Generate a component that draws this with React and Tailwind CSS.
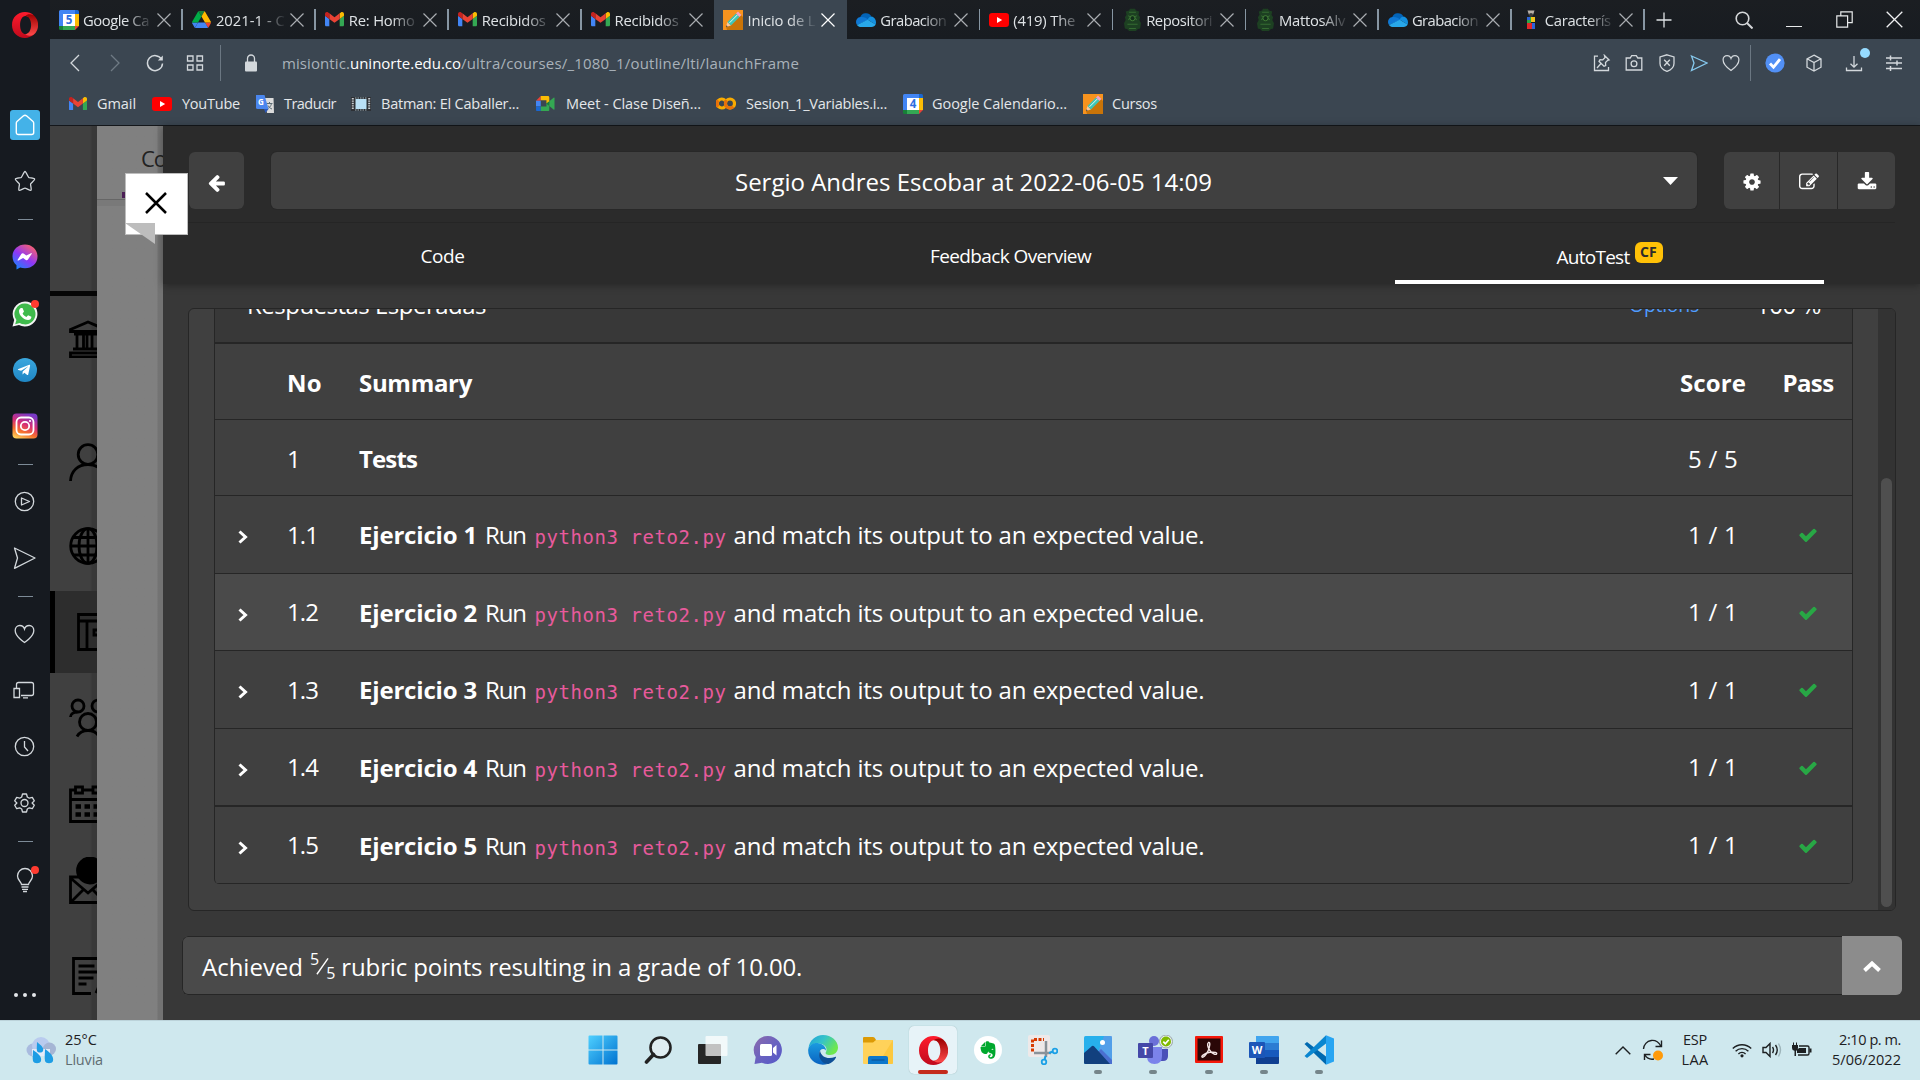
import React, { useLayoutEffect, useRef, useState } from "react";
import { FaTelegramPlane, FaEvernote } from "react-icons/fa";

/* Text whose letter spacing is computed so that it spans exactly `w` pixels. */
function Fit({ w, children, className = "" }) {
  const ref = useRef(null);
  const [ls, setLs] = useState(0);
  useLayoutEffect(() => {
    const n = String(children).length;
    const natural = ref.current.getBoundingClientRect().width;
    setLs((w - natural) / n);
  }, []);
  return (
    <span ref={ref} className={"inline-block whitespace-pre " + className} style={{ letterSpacing: ls + "px" }}>
      {children}
    </span>
  );
}

function Svg({ vb = "0 0 24 24", className = "", children, ...rest }) {
  return (
    <svg viewBox={vb} className={"block shrink-0 " + className} fill="none" {...rest}>
      {children}
    </svg>
  );
}

/* ---------- site icons ---------- */
const Gmail = ({ className = "w-[19px]" }) => (
  <Svg vb="52 42 88 66" className={className}>
    <path fill="#4285f4" d="M58 108h14V74L52 59v43c0 3.32 2.69 6 6 6" />
    <path fill="#34a853" d="M120 108h14c3.32 0 6-2.69 6-6V59l-20 15" />
    <path fill="#fbbc04" d="M120 48v26l20-15v-8c0-7.42-8.47-11.65-14.4-7.2" />
    <path fill="#ea4335" d="M72 74V48l24 18 24-18v26L96 92" />
    <path fill="#c5221f" d="M52 51v8l20 15V48l-5.6-4.2c-5.94-4.45-14.4-.22-14.4 7.2" />
  </Svg>
);
const Drive = () => (
  <Svg vb="0 0 87.3 78" className="w-[19px]">
    <path fill="#4285f4" d="m6.6 66.85 3.85 6.65c.8 1.4 1.95 2.5 3.3 3.3l13.75-23.8h-27.5c0 1.55.4 3.1 1.2 4.5z" />
    <path fill="#00ac47" d="m43.65 25-13.75-23.8c-1.35.8-2.5 1.9-3.3 3.3l-25.4 44a9.06 9.06 0 0 0 -1.2 4.5h27.5z" />
    <path fill="#ea4335" d="m73.55 76.8c1.35-.8 2.5-1.9 3.3-3.3l1.6-2.75 7.65-13.25c.8-1.4 1.2-2.95 1.2-4.5h-27.502l5.852 11.5z" />
    <path fill="#188038" d="m43.65 25 13.75-23.8c-1.35-.8-2.9-1.2-4.5-1.2h-18.5c-1.6 0-3.15.45-4.5 1.2z" />
    <path fill="#4285f4" d="m59.8 53h-32.3l-13.75 23.8c1.35.8 2.9 1.2 4.5 1.2h50.8c1.6 0 3.15-.45 4.5-1.2z" />
    <path fill="#ffba00" d="m73.4 26.5-12.7-22c-.8-1.4-1.95-2.5-3.3-3.3l-13.75 23.8 16.15 28h27.45c0-1.55-.4-3.1-1.2-4.5z" />
  </Svg>
);
const Calendar = ({ day }) => (
  <Svg vb="0 0 20 20" className="w-5">
    <path fill="#4285f4" d="M1.500 0H16v4H4v12H0V1.500Q0 0 1.500 0z" />
    <path fill="#1967d2" d="M16 0h2.500Q20 0 20 1.500V4h-4z" />
    <path fill="#fbbc04" d="M16 4h4v12h-4z" />
    <path fill="#34a853" d="M4 16h12v4H4z" />
    <path fill="#188038" d="M0 16h4v4H1.500Q0 20 0 18.500z" />
    <path fill="#ea4335" d="M16 16h4l-4 4z" />
    <path fill="#fff" d="M4 4h12v12H4z" />
    <text x="10" y="14.200" textAnchor="middle" fontSize="11.500" fontWeight="700" fontFamily="Open Sans, sans-serif" fill="#2f6fe0">{day}</text>
  </Svg>
);
const YouTube = () => (
  <Svg vb="0 0 20 14" className="w-5">
    <rect width="20" height="14" rx="3.200" fill="#f00" />
    <path fill="#fff" d="M8 4l5.200 3L8 10z" />
  </Svg>
);
const Pencil = () => (
  <Svg vb="0 0 20 20" className="w-5">
    <path fill="#f7931e" d="M0 0h20v20H0z" />
    <path fill="#c97408" d="M15 2l5 5v13H4l-1-3z" />
    <path fill="#f9c9a0" d="M3 17l1.500-5 3.500 3.500z" />
    <path fill="#3fc6b6" d="M4.500 12L13 3.500 16.500 7 8 15.500z" />
    <path stroke="#e9fbf8" strokeWidth="1" d="M6.500 12.800l8-8" />
    <path fill="#f4a3c8" d="M13 3.500L15 1.600 18.400 5 16.500 7z" />
    <path fill="#333" d="M3 17l.5-1.700 1.200 1.200z" />
  </Svg>
);
const OneDrive = () => (
  <Svg vb="0 0 20 15" className="w-5">
    <path fill="#0364b8" d="M4 6.500a6 6 0 0 1 11.300-2L12.500 9z" />
    <path fill="#0f78d4" d="M4.500 5C1.500 5.300 0 7.500 0 10q0 1.600 1 3l11.500-5C10.500 5.500 7.500 4.600 4.500 5z" />
    <path fill="#1490df" d="M11.500 7.500a5.500 5.500 0 0 1 4.500-3C18.500 5.500 20 7.500 20 10.500q0 1-.5 2z" />
    <path fill="#28a8ea" d="M1 13c1 1.400 2.400 2 4 2h10.500c2 0 3.400-.9 4.200-2.500L11.700 7.800z" />
  </Svg>
);
const Crest = () => (
  <Svg vb="0 0 20 28" className="w-[17px]">
    <path fill="#1d4022" d="M7 1h6l1 2 4 1-1 4 2 3-1 3 2 4-1 6-3 1-2 2H6l-2-2-3-1-1-6 2-4-1-3 2-3-1-4 4-1z" />
    <path stroke="#356b32" strokeWidth="1.200" d="M6 5h8M5 9l3 2-3 3M15 9l-3 2 3 3M4 19h12M6 24h8" />
    <circle cx="10" cy="12" r="3" fill="#12301a" stroke="#4a8a3c" />
  </Svg>
);
const Figure = () => (
  <Svg vb="0 0 20 22" className="w-5">
    <path fill="#b9b2a8" d="M6.500 1.500h7L12 6H8z" />
    <circle cx="10" cy="6" r="2" fill="#3b3b3b" />
    <path fill="#2aa84a" d="M6 8h4v6H6z" />
    <path fill="#2d62d8" d="M6 8h3v3H6zM10 14h4v6h-4z" />
    <path fill="#f2c21a" d="M10 8h4v5h-4z" />
    <path fill="#e02828" d="M6 14h5v6H6z" />
  </Svg>
);
const Translate = () => (
  <Svg vb="0 0 20 20" className="w-5">
    <path fill="#dcdcdc" d="M9 4h9.500L19 19l-7 0z" />
    <path stroke="#5b6b74" strokeWidth="1" d="M11.500 9.500h6M14.500 8v1.500M16.500 9.500c-.6 3-2.500 4.500-4 5.200M13 11.500c.8 1.800 2.500 3 4 3.500" />
    <path fill="#4a86ee" d="M1 1h8.500l4 14H2.500Q1 15 1 13.500z" />
    <path fill="#2b58b8" d="M9 15h4.500L10.500 19z" />
    <text x="6" y="10.800" textAnchor="middle" fontSize="8" fontWeight="700" fontFamily="Open Sans, sans-serif" fill="#fff">G</text>
  </Svg>
);
const Film = () => (
  <Svg vb="0 0 20 14" className="w-5">
    <rect width="20" height="14" fill="#2d3035" />
    <path fill="#b9e0f5" d="M4.500 2h11v10h-11z" />
    <path stroke="#c8ccd0" strokeWidth="2" strokeDasharray="1.400 1" d="M1.800 1v12M18.200 1v12" />
    <path stroke="#9fb0ba" strokeWidth="1" strokeDasharray="1.500 1" d="M4 1h12M4 13h12" />
  </Svg>
);
const Meet = () => (
  <Svg vb="0 0 20 16" className="w-[19px]">
    <path fill="#ea4335" d="M0 5l5-5v5z" />
    <path fill="#fbbc04" d="M5 0h7.500Q14 0 14 1.500V6l-3 2V4.500H5z" />
    <path fill="#4285f4" d="M0 5h5v6H0z" />
    <path fill="#1967d2" d="M0 11h5v5H1.500Q0 16 0 14.500z" />
    <path fill="#34a853" d="M5 11h6V8l3 2v4.500q0 1.500-1.500 1.500H5z" />
    <path fill="#188038" d="M11 8l3-2.500V10.500z" />
    <path fill="#34a853" d="M14 5.500l4.500-3.700q1-.6 1 .6v11.200q0 1.200-1 .6L14 10.500z" />
  </Svg>
);
const Colab = () => (
  <Svg vb="0 0 20 13" className="w-5">
    <path stroke="#f9ab00" strokeWidth="3.200" d="M9 3.400A4.500 4.500 0 1 0 9 9.600" />
    <circle cx="14" cy="6.500" r="4.500" stroke="#f9ab00" strokeWidth="3.200" />
    <path stroke="#e8710a" strokeWidth="3.200" d="M10.800 3.300A4.500 4.500 0 0 0 17.200 9.700M2.300 9.700A4.500 4.500 0 0 1 2.300 3.300" />
  </Svg>
);
const OperaO = ({ className, id }) => (
  <Svg vb="0 0 28 28" className={className}>
    <defs>
      <linearGradient id={id} x1="0" y1="0" x2="0" y2="1">
        <stop offset="0" stopColor="#ff1b2d" />
        <stop offset="1" stopColor="#c00a1c" />
      </linearGradient>
      <linearGradient id={id + "b"} x1="0" y1="0" x2="0" y2="1">
        <stop offset="0" stopColor="#9c0000" />
        <stop offset="1" stopColor="#ff4b4b" />
      </linearGradient>
    </defs>
    <path fill={"url(#" + id + ")"} fillRule="evenodd" d="M14 0C6 0 0 6 0 14s6 14 14 14c3.500 0 6.800-1.200 9.300-3.400L18 22.600c-1 .8-2.200 1.200-3.500 1.200-3.600 0-5.800-4.500-5.800-9.800s2.200-9.800 5.800-9.800c1.300 0 2.500.4 3.500 1.200l5.300-2C20.800 1.200 17.500 0 14 0z" />
    <path fill={"url(#" + id + "b)"} d="M14.500 4.200c1.200-1.700 5-2.500 8.800-.8a14 14 0 0 1 0 21.200c-3.800 1.700-7.600.9-8.800-.8 3.500 0 6.100-4.500 6.100-9.800s-2.600-9.800-6.100-9.800z" />
  </Svg>
);

/* ---------- tab strip ---------- */
const tabs = [
  [<Calendar day="5" />, "Google Ca", 66],
  [<Drive />, "2021-1 - C", 69],
  [<Gmail />, "Re: Homo", 66],
  [<Gmail />, "Recibidos", 64],
  [<Gmail />, "Recibidos", 64],
  [<Pencil />, "Inicio de L", 68],
  [<OneDrive />, "Grabacion", 66],
  [<YouTube />, "(419) The", 62],
  [<Crest />, "Repositori", 66],
  [<Crest />, "MattosAlv", 66],
  [<OneDrive />, "Grabacion", 66],
  [<Figure />, "Caracterís", 66],
];

function Tab({ icon, text, w, active, line }) {
  return (
    <div className={"flex h-[39px] w-[132.9px] shrink-0 items-center pl-[9px] " + (active ? "bg-[#3b4651]" : "")}>
      <div className="flex w-5 shrink-0 justify-center">{icon}</div>
      <div className="ml-[4px] w-[69px] shrink-0 whitespace-nowrap text-[14.800px] leading-[22px] text-[#dfe3e6] [mask-image:linear-gradient(to_right,black_62%,transparent_102%)]">
        <Fit w={w}>{text}</Fit>
      </div>
      <Svg vb="0 0 14 14" className="ml-[5px] w-[14px]">
        <path d="M.5.5l13 13M13.500.5l-13 13" stroke={active ? "#fff" : "#a9adb1"} strokeWidth="1.200" />
      </Svg>
      <div className={"ml-auto h-[21px] w-[1.500px] shrink-0 " + (line ? "bg-[#8796a3]" : "")} />
    </div>
  );
}

function TabStrip() {
  return (
    <div className="flex h-[39px] items-center bg-gradient-to-b from-[#1b1e22] to-[#181c21]">
      {tabs.map(([icon, text, w], i) => (
        <Tab key={i} icon={icon} text={text} w={w} active={i === 5} line={i !== 4 && i !== 5} />
      ))}
      <Svg vb="0 0 16 16" className="ml-[11px] w-[16px]">
        <path d="M8 .5v15M.5 8h15" stroke="#dfe3e6" strokeWidth="1.300" />
      </Svg>
      <div className="ml-auto flex items-center pr-[17px]">
        <Svg vb="0 0 18 18" className="mr-[33px] w-[18px]">
          <circle cx="7.500" cy="7.500" r="6.300" stroke="#d5d7d9" strokeWidth="1.600" />
          <path d="M12 12l5.500 5.500" stroke="#d5d7d9" strokeWidth="2" />
        </Svg>
        <div className="mr-[34px] mt-[14px] h-[1.500px] w-[16px] bg-[#e8eaeb]" />
        <Svg vb="0 0 17 17" className="mr-[33px] w-[17px]" stroke="#e8eaeb" strokeWidth="1.200">
          <path d="M.8 4.800h10.800v11.400H.8zM4.800 4.800V.8h11.400v10.800h-4.400" />
        </Svg>
        <Svg vb="0 0 17 17" className="w-[17px]" stroke="#f0f1f2" strokeWidth="1.300">
          <path d="M.7.7l15.600 15.600M16.300.7L.7 16.300" />
        </Svg>
      </div>
    </div>
  );
}

/* ---------- address bar ---------- */
const heart = "M12 21S2.500 14.500 2.500 8.200C2.500 5 4.800 3 7.300 3 9.500 3 11.200 4.200 12 6.500 12.800 4.200 14.500 3 16.700 3c2.500 0 4.800 2 4.800 5.200C21.500 14.500 12 21 12 21z";

function AddressBar() {
  const s = { stroke: "#d3d8dc", strokeWidth: 1.3 };
  return (
    <div className="flex h-[47px] items-center pl-[19px] pr-[17px]">
      <Svg vb="0 0 12 18" className="w-[12px]" {...s}><path d="M10 1L2 9l8 8" /></Svg>
      <Svg vb="0 0 12 18" className="ml-[28px] w-[12px]" stroke="#6f7a84" strokeWidth="1.300"><path d="M2 1l8 8-8 8" /></Svg>
      <Svg vb="0 0 18 18" className="ml-[25px] w-[18px]" {...s} strokeWidth="1.500">
        <path d="M15.600 5.500A7.500 7.500 0 1 0 16.500 9.500" />
        <path d="M16.800 1.500v5h-5z" fill="#d3d8dc" stroke="none" />
      </Svg>
      <Svg vb="0 0 18 18" className="ml-[22px] w-[18px]" {...s}>
        <path d="M1.500 2h5.500v5H1.500zM11 2h5.500v5H11zM1.500 11h5.500v5H1.500zM11 11h5.500v5H11z" />
      </Svg>
      <div className="ml-[16px] h-[36px] w-px bg-[#6b7782]" />
      <Svg vb="0 0 14 18" className="ml-[23px] w-[14px]">
        <path d="M3.500 8V4.500a3.500 3.500 0 0 1 7 0V8" stroke="#d3d8dc" strokeWidth="1.300" />
        <rect x="1" y="7.500" width="12" height="10" rx="1" fill="#d3d8dc" />
      </Svg>
      <div className="ml-[24px] flex text-[15px] leading-[24px] text-[#a9b2ba]">
        <Fit w={68}>misiontic.</Fit>
        <Fit w={111} className="text-white">uninorte.edu.co</Fit>
        <Fit w={338}>/ultra/courses/_1080_1/outline/lti/launchFrame</Fit>
      </div>
      <div className="ml-auto flex items-center">
        <Svg vb="0 0 18 18" className="w-[18px]" {...s}>
          <path d="M5 2.200H1.500v14.300h14V13M11.500 1.500l4.500 4.500-1.300.3-2.200 2.300.2 3-1.700.7-5-5 1-1.700 2.800.2 2.200-2.200zM8 9.500l-4 4.500" />
        </Svg>
        <Svg vb="0 0 18 18" className="ml-[14px] w-[18px]" {...s}>
          <path d="M1.200 4h4l1.500-2.300h4.600L12.800 4h4v12H1.200z" /><circle cx="9" cy="9.800" r="2.900" />
        </Svg>
        <Svg vb="0 0 18 18" className="ml-[15px] w-[18px]" {...s}>
          <path d="M9 .8l7 2.200v6.500c0 4-3.500 6.600-7 7.900-3.500-1.300-7-3.900-7-7.900V3zM6.200 5.800l5.600 6M11.800 5.800l-5.600 6" />
        </Svg>
        <Svg vb="0 0 18 18" className="ml-[14px] w-[18px]" stroke="#86c9ee" strokeWidth="1.300">
          <path d="M1.500 2l15.500 7L1.500 16.500l2.500-7.500z" />
        </Svg>
        <Svg className="ml-[13px] w-[20px]" stroke="#d3d8dc" strokeWidth="1.500"><path d={heart} /></Svg>
        <div className="ml-[9px] h-[36px] w-px bg-[#6b7782]" />
        <Svg vb="0 0 20 20" className="ml-[14px] w-[20px]">
          <circle cx="10" cy="10" r="9.600" fill="#5290f5" />
          <path d="M5 10.500l3.500 3.700L15 6.200" stroke="#fff" strokeWidth="2.800" />
        </Svg>
        <Svg vb="0 0 18 18" className="ml-[20px] w-[18px]" {...s}>
          <path d="M9 1.200l7 3.600v8.400l-7 3.800-7-3.800V4.800zM2 4.800l7 3.700 7-3.700M9 8.500V17" />
        </Svg>
        <div className="relative ml-[22px]">
          <Svg vb="0 0 18 18" className="w-[18px]" {...s}><path d="M9 2v11M5.500 9.700L9 13.200l3.500-3.500M1.500 13.500v3h15v-3" /></Svg>
          <div className="absolute -top-[6px] left-[15px] size-[10px] rounded-full bg-[#96dbff]" />
        </div>
        <Svg vb="0 0 18 18" className="ml-[22px] w-[18px]" {...s} strokeWidth="1.500">
          <path d="M1 4h16M1 9h16M1 14.500h16M5.500 1.500v5M12 6.500v5M5.500 12v5" />
        </Svg>
      </div>
    </div>
  );
}

const bookmarks = [
  ["w-[83px]", <Gmail className="w-[18px]" />, "ml-[10px]", "Gmail", 39],
  ["w-[103px]", <YouTube />, "ml-[10px]", "YouTube", 58],
  ["w-[96px]", <Translate />, "ml-[9px]", "Traducir", 52],
  ["w-[185px]", <Film />, "ml-[10px]", "Batman: El Caballer...", 138],
  ["w-[180px]", <Meet />, "ml-[11px]", "Meet - Clase Diseñ...", 135],
  ["w-[187px]", <Colab />, "ml-[10px]", "Sesion_1_Variables.i...", 141],
  ["w-[180px]", <Calendar day="4" />, "ml-[9px]", "Google Calendario...", 135],
  ["w-[100px]", <Pencil />, "ml-[9px]", "Cursos", 45],
];

function Bookmarks() {
  return (
    <div className="flex h-[40px] items-center border-b border-[#14171b] pb-[4px] pl-[19px] text-[14.500px] leading-[22px] text-[#e4e7ea]">
      {bookmarks.map(([w, icon, gap, label, tw]) => (
        <div key={label} className={"flex shrink-0 items-center " + w}>
          {icon}
          <div className={gap}><Fit w={tw}>{label}</Fit></div>
        </div>
      ))}
    </div>
  );
}

/* ---------- browser side rail ---------- */
const Dot = () => <div className="absolute left-[19px] -top-[1px] size-[8px] rounded-full bg-[#ff3b30]" />;
const Dash = ({ className }) => (
  <div className={"flex h-[12px] items-center " + className}><div className="h-px w-[15px] bg-[#7d8b97]" /></div>
);

function Rail() {
  const s = { stroke: "#d3d8dc", strokeWidth: 1.3 };
  return (
    <div className="flex w-[50px] shrink-0 flex-col items-center bg-[#161a20]">
      <OperaO id="opA" className="mt-[12px] w-[26px]" />
      <div className="mt-[72px] flex h-[30px] w-[30px] items-center justify-center rounded-[3px] bg-[#44b2e8]">
        <Svg vb="0 0 20 22" className="h-[22px] w-[20px]" stroke="#fff" strokeWidth="1.400">
          <path d="M8.500 1.800Q10 .8 11.500 1.800L18 7.500q.7.700.7 1.700v9.300a2 2 0 0 1-2 2H3.300a2 2 0 0 1-2-2V9.200q0-1 .7-1.700z" strokeLinejoin="round" />
        </Svg>
      </div>
      <Svg vb="0 0 26 26" className="mt-[28px] w-[26px]" {...s}>
        <path d="M13 3.500c1 0 3 5.500 3.700 5.900.6.500 5.700.6 6 1.600.3.900-3.800 4.200-4.100 5-.3.800 1.200 5.700.4 6.300-.8.500-5-2.200-6-2.200s-5.200 2.700-6 2.200c-.8-.6.700-5.500.4-6.300-.3-.800-4.400-4.100-4.100-5 .3-1 5.400-1.100 6-1.600.7-.4 2.700-5.900 3.700-5.900z" />
      </Svg>
      <Dash className="mt-[19px]" />
      <Svg vb="0 0 26 26" className="mt-[19px] w-[26px]">
        <defs><linearGradient id="msg" x1=".1" y1="1" x2=".8" y2="0"><stop offset="0" stopColor="#0a8cff" /><stop offset=".5" stopColor="#9036f5" /><stop offset="1" stopColor="#ff6468" /></linearGradient></defs>
        <path fill="url(#msg)" d="M13 .5C6 .5.500 5.600.500 12.400c0 3.500 1.500 6.600 4 8.800V25.500l3.700-2c1.500.5 3.100.7 4.800.7 7 0 12.500-5 12.500-11.800S20 .5 13 .5z" />
        <path fill="#fff" d="M5.500 16l3.800-6q1-1.300 2.300-.4l2.700 2L19 9.200q1-.4.800.5L16 15.500q-.9 1.300-2.200.4l-2.700-2-4.600 2.500q-1 .4-1-.4z" />
      </Svg>
      <div className="relative mt-[31px] flex size-[26px] items-center justify-center">
        <Svg vb="0 0 26 26" className="w-[26px]">
          <path d="M13 .5a12.500 12.500 0 1 1-6 23.500L.5 25.500 2.200 19A12.500 12.500 0 0 1 13 .5z" fill="#f4f4f4" />
          <path d="M13 2.600a10.400 10.400 0 1 1-5.300 19.300L3.200 23.200 4.400 19A10.400 10.400 0 0 1 13 2.600z" fill="#3fba4c" />
          <path fill="#fff" d="M9.300 7l1.200 0 1.500 3.500-1.400 1.900c.9 1.700 2 2.700 3.800 3.500l1.700-1.700 3.300 1.600c.1 2-1.500 3.300-3.300 3.300C11.800 19 6.900 14.200 7 10c.1-1.500 1-2.800 2.300-3z" />
        </Svg>
        <Dot />
      </div>
      <div className="mt-[30px] flex size-[26px] items-center justify-center">
        <div className="flex size-[24px] items-center justify-center rounded-full bg-gradient-to-b from-[#3aa7de] to-[#1f86c4]">
          <FaTelegramPlane className="mr-[2px] size-[14px] text-white" />
        </div>
      </div>
      <Svg vb="0 0 26 26" className="mt-[30px] w-[26px]">
        <defs><linearGradient id="ig" x1=".2" y1="1" x2=".6" y2="0"><stop offset="0" stopColor="#ffd05a" /><stop offset=".3" stopColor="#f7702d" /><stop offset=".6" stopColor="#d62e77" /><stop offset="1" stopColor="#7a3ac8" /></linearGradient></defs>
        <rect x=".5" y=".5" width="25" height="25" rx="4" fill="url(#ig)" />
        <rect x="4.500" y="4.500" width="17" height="17" rx="4.500" stroke="#fff" strokeWidth="1.800" />
        <circle cx="13" cy="13" r="4.200" stroke="#fff" strokeWidth="1.800" /><circle cx="18" cy="8" r="1.100" fill="#fff" />
      </Svg>
      <Dash className="mt-[19px]" />
      <Svg vb="0 0 26 26" className="mt-[19px] w-[26px]" {...s}><circle cx="12.500" cy="12.500" r="9.200" /><path d="M9.500 9l8 3.500-8 3.500z" strokeLinejoin="round" /></Svg>
      <Svg vb="0 0 26 26" className="mt-[30px] w-[26px]" {...s}><path d="M2.500 3L23 13 2.500 23.300 5.500 13z" strokeLinejoin="round" /></Svg>
      <Dash className="mt-[19px]" />
      <Svg vb="0 0 26 26" className="mt-[19px] w-[26px]" {...s}>
        <path d="M12.500 21.500S3.200 15.500 3.200 9.500c0-3 2-5 4.600-5 2.200 0 4 1.200 4.700 3.500.7-2.300 2.500-3.500 4.700-3.500 2.600 0 4.600 2 4.600 5 0 6-9.300 12-9.300 12z" />
      </Svg>
      <Svg vb="0 0 26 26" className="mt-[31px] w-[26px]" {...s}>
        <path d="M4.500 10V6.500a2 2 0 0 1 2-2h13a2 2 0 0 1 2 2v9a2 2 0 0 1-2 2H9M2 10.500h5.500v9H2zM11 19.800h5" />
      </Svg>
      <Svg vb="0 0 26 26" className="mt-[30px] w-[26px]" {...s}><circle cx="12.500" cy="12.500" r="9.200" /><path d="M12.500 7v6l3.500 4" /></Svg>
      <Svg vb="0 0 26 26" className="mt-[30px] w-[26px]" {...s}>
        <circle cx="12.500" cy="13" r="3.500" />
        <path strokeLinejoin="round" d="M10.500 4h4l.8 3 2 1.200 3-.8 2 3.500-2.200 2.100v0l2.200 2.200-2 3.500-3-.9-2 1.200-.8 3h-4l-.8-3-2-1.200-3 .9-2-3.500 2.200-2.200-2.200-2.100 2-3.500 3 .8 2-1.200z" />
      </Svg>
      <Dash className="mt-[19px]" />
      <div className="relative mt-[20px] h-[26px] w-[28px]">
        <Svg vb="0 0 26 26" className="ml-[1px] w-[26px]" {...s}>
          <path d="M9.500 17.500c0-2.500-4-4-4-8.500a7.500 7.500 0 0 1 15 0c0 4.500-4 6-4 8.500zM9.500 20h7M10 22.300h6M11 24.500h4" />
        </Svg>
        <div className="absolute -top-[1px] left-[20px] size-[8px] rounded-full bg-[#ff3b30]" />
      </div>
      <div className="mt-[100px] flex gap-[5px]">
        {[0, 1, 2].map((i) => <div key={i} className="size-[4px] rounded-full bg-[#e4e7ea]" />)}
      </div>
    </div>
  );
}

/* ---------- course menu strip ---------- */
function MenuStrip() {
  const s = { stroke: "#000", strokeWidth: 2.8 };
  return (
    <div className="w-[47px] shrink-0 overflow-hidden bg-gradient-to-r from-[#404040] from-85% to-[#383838] to-90%">
      <div className="mt-[165px] h-[5px] bg-[#050505]" />
      <Svg vb="0 0 38 38" className="ml-[19px] mt-[24px] w-[38px]" {...s}>
        <path d="M1.500 9.500L19 2l17.500 7.500v2h-35zM5 14h28M8 14v15M14.500 14v15M18 14v15M23 14v15M30 14v15M4 29h30v4M1.500 37v-4h35v4z" />
      </Svg>
      <Svg vb="0 0 38 38" className="ml-[19px] mt-[85px] w-[38px]" {...s}>
        <circle cx="19" cy="11.500" r="9.800" /><path d="M1.500 38C2 28 9 21.500 19 21.500S36 28 36.500 38" />
      </Svg>
      <Svg vb="0 0 38 38" className="ml-[19px] mt-[46px] w-[38px]" {...s}>
        <circle cx="19" cy="19" r="17.300" /><ellipse cx="19" cy="19" rx="9" ry="17.300" /><path d="M19 1v36M2 19h34M4 10.500h30M4 28h30" />
      </Svg>
      <div className="mt-[26px] h-[82px] border-l-[5px] border-black bg-[#2d2d2d] pt-[22px]">
        <Svg vb="0 0 38 38" className="ml-[22px] w-[38px]" {...s}>
          <path d="M1.500 1.500h36v35h-36zM1.500 8h36M10 8v28M22 17h14v5H17v-5z" />
        </Svg>
      </div>
      <Svg vb="0 0 38 40" className="ml-[19px] mt-[25px] w-[38px]" {...s}>
        <circle cx="9" cy="8" r="6" /><circle cx="29" cy="8" r="6" /><circle cx="19" cy="24" r="8.500" />
        <path d="M1.500 19c0-3 3-5 7-5M36.500 19c0-3-3-5-7-5M8 38.500c2-3.500 6-6 11-6s9 2.500 11 6" />
      </Svg>
      <Svg vb="0 0 38 38" className="ml-[19px] mt-[47px] w-[38px]" {...s}>
        <path d="M7 5H1.500v31.500h35V5H31M1.500 14.500h35M14 5h9M6.500 2h7v6h-7zM24 2h7v6h-7z" />
        <path strokeWidth="4.500" strokeDasharray="5.500 3.500" d="M6.500 21.500h26M6.500 29.500h26" />
      </Svg>
      <Svg vb="0 0 38 48" className="ml-[19px] mt-[34px] w-[38px]" {...s}>
        <path d="M1.500 20h35v25.500h-35zM1.500 21L19 36 36.500 21M2 45l12-12M36 45L24 33" /><circle cx="21" cy="13.500" r="12.500" fill="#000" />
      </Svg>
      <Svg vb="0 0 38 38" className="ml-[22px] mt-[52px] w-[38px]" {...s}>
        <path d="M19 36.500H1.500v-35h30v25M6.500 9h16M6.500 15h20M6.500 21h15M6.500 27h8M24 36l3-7" />
      </Svg>
    </div>
  );
}

/* ---------- submission panel ---------- */
const FaIcon = ({ d, vb = "0 0 1792 1792", className = "size-[19px]" }) => (
  <svg viewBox={vb} className={className} fill="currentColor"><path d={d} /></svg>
);
const cog = "M1024 896q0-106-75-181t-181-75-181 75-75 181 75 181 181 75 181-75 75-181zm512-109v222q0 12-8 23t-20 13l-185 28q-19 54-39 91 35 50 107 138 10 12 10 25t-9 23q-27 37-99 108t-94 71q-12 0-26-9l-138-108q-44 23-91 38-16 136-29 186-7 28-36 28h-222q-14 0-24.500-8.500t-11.500-21.500l-28-184q-49-16-90-37l-141 107q-10 9-25 9-14 0-25-11-126-114-165-168-7-10-7-23 0-12 8-23 15-21 51-66.500t54-70.500q-27-50-41-99l-183-27q-13-2-21-12.500t-8-23.500v-222q0-12 8-23t19-13l186-28q14-46 39-92-40-57-107-138-10-12-10-24 0-10 9-23 26-36 98.500-107.500t94.500-71.500q13 0 26 10l138 107q44-23 91-38 16-136 29-186 7-28 36-28h222q14 0 24.500 8.500t11.500 21.500l28 184q49 16 90 37l142-107q9-9 24-9 13 0 25 10 129 119 165 170 7 8 7 22 0 12-8 23-15 21-51 66.500t-54 70.500q26 50 41 98l183 28q13 2 21 12.500t8 23.500z";
const download = "M1344 1344q0-26-19-45t-45-19-45 19-19 45 19 45 45 19 45-19 19-45zm256 0q0-26-19-45t-45-19-45 19-19 45 19 45 45 19 45-19 19-45zm128-224v320q0 40-28 68t-68 28h-1472q-40 0-68-28t-28-68v-320q0-40 28-68t68-28h465l135 136q58 56 136 56t136-56l136-136h464q40 0 68 28t28 68zm-325-569q17 41-14 70l-448 448q-18 19-45 19t-45-19l-448-448q-31-29-14-70 17-39 59-39h256v-448q0-26 19-45t45-19h256q26 0 45 19t19 45v448h256q42 0 59 39z";
const edit = "M888 1184l116-116-152-152-116 116v56h96v96h56zm440-720q-16-16-33 1l-350 350q-17 17-1 33t33-1l350-350q17-17 1-33zm80 594v190q0 119-84.500 203.500t-203.500 84.500h-832q-119 0-203.500-84.500t-84.500-203.500v-832q0-119 84.500-203.500t203.500-84.500h832q63 0 117 25 15 7 18 23 3 17-9 29l-49 49q-14 14-32 8-23-6-45-6h-832q-66 0-113 47t-47 113v832q0 66 47 113t113 47h832q66 0 113-47t47-113v-126q0-13 9-22l64-64q15-15 35-7t20 29zm-96-738l288 288-672 672h-288v-288zm444 132l-92 92-288-288 92-92q28-28 68-28t68 28l152 152q28 28 28 68t-28 68z";
const arrowLeft = "M1536 896v128q0 53-32.500 90.500t-84.500 37.500h-704l293 294q38 36 38 90t-38 90l-75 76q-37 37-90 37-52 0-91-37l-651-652q-37-37-37-90 0-52 37-91l651-650q38-38 91-38 52 0 90 38l75 74q38 38 38 91t-38 91l-293 293h704q52 0 84.500 37.500t32.500 90.500z";
const check = "M1671 566q0 40-28 68l-724 724-136 136q-28 28-68 28t-68-28l-136-136-362-362q-28-28-28-68t28-68l136-136q28-28 68-28t68 28l294 295 656-657q28-28 68-28t68 28l136 136q28 28 28 68z";

function Header() {
  return (
    <div className="h-[158px] bg-[#2b2b2b] shadow-[0_1px_8px_rgba(0,0,0,0.35)]">
      <div className="flex px-[25px] pt-[26px] text-white">
        <div className="ml-[1px] flex h-[57px] w-[55px] items-center justify-center rounded-[6px] bg-[#404040]">
          <FaIcon d={arrowLeft} vb="0 0 1536 1920" className="mt-[5px] h-[21px] w-[17px]" />
        </div>
        <div className="ml-[27px] flex h-[57px] w-[1426px] items-center rounded-[6px] bg-[#404040] shadow-[0_0_0_1px_#282828]">
          <div className="ml-[464px] pt-[2px] text-[24px] leading-[32px]"><Fit w={477}>Sergio Andres Escobar at 2022-06-05 14:09</Fit></div>
          <Svg vb="0 0 15 8" className="ml-auto mr-[19px] w-[15px]"><path d="M0 0h15L7.500 8z" fill="#fff" /></Svg>
        </div>
        <div className="ml-[27px] flex h-[57px] w-[171px] overflow-hidden rounded-[6px] bg-[#404040]">
          <div className="flex w-[56px] items-center justify-center border-r border-[#282828]"><FaIcon d={cog} vb="0 0 1536 1792" className="mt-[3px] h-[20px] w-[18px]" /></div>
          <div className="flex w-[58px] items-center justify-center border-r border-[#282828]"><FaIcon d={edit} className="mt-[2px] size-[20px]" /></div>
          <div className="flex w-[57px] items-center justify-center"><FaIcon d={download} className="mt-[2px] size-[20px]" /></div>
        </div>
      </div>
      <div className="mx-[25px] mt-[13px] flex h-[62px] border-t border-[#252525] pl-[40px] text-[19px] leading-[26px] text-white">
        <div className="flex w-[429px] items-center justify-center pt-[4px]"><Fit w={44}>Code</Fit></div>
        <div className="ml-[139px] mr-[170px] flex w-[429px] items-center justify-center pt-[4px]"><Fit w={161}>Feedback Overview</Fit></div>
        <div className="flex h-[61px] w-[429px] items-center justify-center border-b-[4px] border-white pt-[1px]">
          <div className="pt-[9px]"><Fit w={73}>AutoTest</Fit></div>
          <div className="ml-[5px] flex h-[21px] w-[28px] items-center justify-center rounded-[6px] bg-[#ffc107] text-[14px] font-bold leading-[20px] text-[#2b2b2b]"><Fit w={17}>CF</Fit></div>
        </div>
      </div>
    </div>
  );
}

const Chevron = () => (
  <Svg vb="0 0 10 14" className="mt-[5px] w-[10px]"><path d="M1.500 1.500L7.500 7l-6 5.500" stroke="#fff" strokeWidth="3" /></Svg>
);

function Row({ h, no, title, score, pass, run, hover, line = "border-b", head }) {
  const bold = head ? "font-bold" : "";
  const drop = run ? "" : "pt-[2px] ";
  return (
    <div className={"flex shrink-0 items-center border-[#262626] " + drop + h + " " + line + " " + (hover ? "bg-[#4a4a4a]" : "")}>
      <div className="w-[72px] pl-[23px]">{run && <Chevron />}</div>
      <div className={"w-[72px] " + bold}><Fit w={no[1]}>{no[0]}</Fit></div>
      <div className={"flex items-baseline " + (run ? "pt-[1px]" : "")}>
        <Fit w={title[1]} className="font-bold">{title[0]}</Fit>
        {run && (
          <>
            <Fit w={41} className="ml-[8px]">Run</Fit>
            <Fit w={192} className="ml-[8.500px] font-['DejaVu_Sans_Mono',monospace] text-[19px] leading-[26px] text-[#e85a9c]">python3 reto2.py</Fit>
            <Fit w={471} className="ml-[7px]">and match its output to an expected value.</Fit>
          </>
        )}
      </div>
      <div className={"ml-auto flex w-[90px] justify-center " + bold}><Fit w={score[1]}>{score[0]}</Fit></div>
      <div className="flex w-[94px] items-center justify-center pl-[7px] pr-[3px]">
        {head ? <Fit w={51} className="ml-[2px] font-bold">{pass}</Fit> : run && <FaIcon d={check} className="ml-[1px] mt-[1px] size-[20px] text-[#28a745]" />}
      </div>
    </div>
  );
}

const exerciseRows = [
  ["h-[78px]", "border-b", 1],
  ["h-[77px]", "border-b", 2],
  ["h-[78px]", "border-b", 3],
  ["h-[78px]", "border-b-2", 4],
  ["h-[77px]", "border-b", 5],
];

function Results() {
  return (
    <div className="ml-[25px] mt-[24px] flex h-[603px] w-[1708px] overflow-hidden rounded-[6px] border border-[#262626] bg-[#404040] text-[24px] leading-[32px] text-white">
      <div className="ml-[25px] h-[575px] w-[1639px] overflow-hidden rounded-b-[5px] border-x border-[#262626]">
        <div className="flex h-[35px] items-end overflow-hidden border-b-2 border-[#262626] bg-[#383838] pb-[21px] pl-[32px] pr-[31px]">
          <Fit w={239}>Respuestas Esperadas</Fit>
          <div className="ml-auto text-[19.500px] text-[#4f9cff]"><Fit w={70}>Options</Fit></div>
          <div className="ml-[57px]"><Fit w={65}>100 %</Fit></div>
        </div>
        <Row head h="h-[76px]" no={["No", 35]} title={["Summary", 113]} score={["Score", 66]} pass="Pass" />
        <Row h="h-[76px]" no={["1", 12]} title={["Tests", 58]} score={["5 / 5", 50]} />
        {exerciseRows.map(([h, line, n]) => (
          <Row key={n} h={h} line={line} run hover={n === 2} no={["1." + n, 31]} title={["Ejercicio " + n, 118]} score={["1 / 1", 50]} />
        ))}
      </div>
      <div className="ml-auto w-[17px] bg-[#333] pl-[3px] pt-[169px]">
        <div className="h-[429px] w-[11px] rounded-full bg-[#4f4f4f]" />
      </div>
    </div>
  );
}

function GradeBar() {
  return (
    <div className="ml-[19px] mt-[25px] flex h-[59px] w-[1720px] items-center overflow-hidden rounded-[6px] bg-[#4a4a4a] text-[24px] leading-[32px] text-white">
      <div className="flex h-[59px] flex-1 items-center rounded-l-[6px] border-y border-l border-[#262626] pl-[19px] pt-[2px]">
        <Fit w={101}>Achieved</Fit>
        <div className="ml-[7px] flex items-center">
          <span className="-mt-[16px] text-[16px] leading-[20px]">5</span>
          <Svg vb="0 0 14 18" className="-ml-[3px] -mr-[3px] w-[13px]"><path d="M1 17.500L13 .5" stroke="#fff" strokeWidth="1.500" /></Svg>
          <span className="mt-[13px] text-[16px] leading-[20px]">5</span>
        </div>
        <Fit w={461} className="ml-[6px]">rubric points resulting in a grade of 10.00.</Fit>
      </div>
      <div className="flex h-[59px] w-[60px] items-center justify-center bg-[#8c8c8c]">
        <Svg vb="0 0 18 12" className="w-[18px]"><path d="M1.500 10.500L9 3.500l7.500 7" stroke="#fff" strokeWidth="4" /></Svg>
      </div>
    </div>
  );
}

function Page() {
  return (
    <div className="relative flex h-[894px]">
      <MenuStrip />
      <div className="w-[66px] shrink-0 overflow-hidden bg-gradient-to-r from-[#808080] from-[60px] to-[#737373] to-[61px]">
        <div className="h-[73px] pl-[44px] pt-[18px] text-[22px] leading-[28px] tracking-[-1px] text-[#222]">Co</div>
        <div className="h-px bg-[#666]" />
        <div className="h-[6px] bg-[#797979]" />
      </div>
      <div className="min-w-0 flex-1 bg-[#383838]">
        <Header />
        <Results />
        <GradeBar />
      </div>
      <div className="absolute left-[72px] top-[66px] h-[6px] w-[5px] bg-[#4b1f56]" />
      <div className="absolute left-[75px] top-[47px] flex h-[62px] w-[63px] items-center justify-center border border-[#bdbdbd] bg-white">
        <Svg vb="0 0 22 22" className="mb-[2px] mr-[1px] w-[22px]"><path d="M1 1l20 20M21 1L1 21" stroke="#000" strokeWidth="2.500" /></Svg>
      </div>
      <Svg vb="0 0 30 21" className="absolute left-[75px] top-[97px] w-[30px]"><path d="M0 0h30v21z" fill="#bdbdbd" /></Svg>
    </div>
  );
}

/* ---------- Windows taskbar ---------- */
const apps = [
  <Svg vb="0 0 30 30" className="w-[30px]">
    <defs><linearGradient id="win" x1="0" y1="0" x2="1" y2="1"><stop offset="0" stopColor="#4fd0ff" /><stop offset="1" stopColor="#0072d0" /></linearGradient></defs>
    <path fill="url(#win)" d="M.5 1.500Q.5.5 1.500.5h13V14.500H.5zM15.500.5h13q1 0 1 1v13h-14zM.5 15.500h14v14h-13q-1 0-1-1zM15.500 15.500h14v13q0 1-1 1h-13z" />
  </Svg>,
  <Svg vb="0 0 28 28" className="w-[28px]"><circle cx="16.500" cy="11.500" r="10" fill="#dfecf0" stroke="#222" strokeWidth="2.600" /><path d="M9.500 18.500L2.500 26" stroke="#222" strokeWidth="3.600" strokeLinecap="round" /></Svg>,
  <Svg vb="0 0 30 28" className="w-[30px]"><rect y="8" width="23" height="20" rx="1" fill="#262626" /><rect x="7.500" width="22" height="20" rx="1" fill="#fff" opacity=".72" /></Svg>,
  <Svg vb="0 0 30 30" className="w-[30px]">
    <defs><linearGradient id="chat" x1="0" y1="0" x2="1" y2="1"><stop offset="0" stopColor="#8d6bab" /><stop offset=".5" stopColor="#6a62c0" /><stop offset="1" stopColor="#5558c8" /></linearGradient></defs>
    <path fill="url(#chat)" d="M15 1a14 14 0 1 1-6 26.700L1.500 29l1.200-7A14 14 0 0 1 15 1z" /><rect x="7" y="9" width="12" height="12" rx="1.500" fill="#fff" /><path fill="#fff" d="M20 13l3.500-3v10.500L20 17.500z" />
  </Svg>,
  <Svg vb="0 0 30 30" className="w-[30px]">
    <defs>
      <linearGradient id="eg" x1="0" y1="0" x2="1" y2=".5"><stop offset="0" stopColor="#1fa0dc" /><stop offset=".5" stopColor="#35c3c8" /><stop offset="1" stopColor="#6ee84e" /></linearGradient>
      <linearGradient id="eb" x1="0" y1="0" x2="0" y2="1"><stop offset="0" stopColor="#1b9be0" /><stop offset="1" stopColor="#0a62c0" /></linearGradient>
    </defs>
    <path fill="url(#eg)" d="M.5 13C1.500 5.500 7.500 0 15 0c8.500 0 15 6 15 12.500 0 4.500-3.500 7.500-8 7.500-3.500 0-5-1.500-4.200-2.800 1.700-2.200.7-7.200-5.300-8.400C7 8 2.500 9.500.5 13z" />
    <path fill="url(#eb)" d="M.2 14.500C1 10 5.500 7.500 10.500 8.200c4 .600 7.500 3.300 7.500 7.300-4-4-9 1-5.500 7 1.500 3 4 5.500 7 6.500C9 32-.5 24.500.2 14.500z" />
    <path fill="#0e4f96" d="M12 15.500c-3.500 7 3.500 14.500 8.500 13.500 3-1 6-3.500 7.500-6.500.3-.7-.3-1-1-.6-6.500 2.600-14 .6-15-6.400z" />
  </Svg>,
  <Svg vb="0 0 30 27" className="w-[30px]"><path fill="#dc9a05" d="M0 1q0-1 1-1h9q1.500 0 2.500 2l1 2H30v8H0z" /><path fill="#ffd25a" d="M0 5.500h10l3-2.500h17v23q0 1-1 1H1q-1 0-1-1z" /><path fill="#f9bd24" d="M30 3v23q0 1-1 1H15z" opacity=".5" /><path fill="#0c77cb" d="M5 27v-6q0-2 2-2h16q2 0 2 2v6z" /><path stroke="#0a4f90" d="M8.500 23h13" /></Svg>,
  <OperaO id="opB" className="w-[29px]" />,
  <div className="flex size-[28px] items-center justify-center rounded-full bg-white"><FaEvernote className="size-[20px] text-[#00a82d]" /></div>,
  <Svg vb="0 0 30 30" className="w-[30px]">
    <rect width="22" height="22" rx="2" fill="#eee9e9" /><path stroke="#d83b01" strokeWidth="3" strokeDasharray="3 1.500" d="M4.500 16.500V4.500H16" />
    <path stroke="#8a9299" strokeWidth="2.500" d="M18 6v16M6 18h17" /><circle cx="27" cy="16" r="2.300" stroke="#1ba0e6" strokeWidth="1.800" /><circle cx="16" cy="27" r="2.300" stroke="#1ba0e6" strokeWidth="1.800" /><path stroke="#1ba0e6" strokeWidth="2" d="M21 18l4-1.500M17.500 21L16.500 25" />
  </Svg>,
  <Svg vb="0 0 28 28" className="w-[28px]"><rect width="28" height="28" rx="1.500" fill="#27b0ec" /><path fill="#6f94e8" d="M20 0h8v28L14 16z" opacity=".6" /><path fill="#4a6fd0" d="M14 16l3-3 11 11v4H18z" /><path fill="#12407e" d="M0 17l8-7q1-.6 2 .2L26 28H1.500Q0 28 0 26.500z" /><circle cx="18.500" cy="6.500" r="2.500" fill="#fff" /></Svg>,
  <Svg vb="0 0 36 30" className="ml-[6px] w-[36px]">
    <circle cx="16" cy="6" r="5" fill="#6b70d8" /><path fill="#4a50b8" d="M21 14h9v7q0 5-5 5h-4z" /><path fill="#7b83eb" d="M9 12h15v9q0 8-7.500 8T9 21z" /><rect y="8" width="15" height="15" rx="1" fill="#4448a8" />
    <text x="7.500" y="19.500" textAnchor="middle" fontSize="11" fontWeight="700" fontFamily="Open Sans, sans-serif" fill="#fff">T</text>
    <circle cx="28" cy="6.500" r="6.500" fill="#e8eef0" stroke="#9aa6a8" /><circle cx="28" cy="6.500" r="5" fill="#7fba00" /><path d="M25.300 6.700l2 2 3.500-4" stroke="#fff" strokeWidth="1.700" />
  </Svg>,
  <Svg vb="0 0 28 28" className="w-[28px]"><rect width="28" height="27" rx="1" fill="#f5180a" /><rect x="2.500" y="2.500" width="23" height="22" fill="#2a0707" /><path stroke="#f3e6e6" strokeWidth="1.400" d="M13.500 6.500c2-1 1.500 4-.5 8.500s-5 7-6 6 3-4 8-4.700 7.500.5 6.500 1.700-5-1-7-4-2.500-6.500-1-7.500z" /></Svg>,
  <Svg vb="0 0 30 28" className="w-[30px]">
    <path fill="#41a5ee" d="M7 0h22q1 0 1 1v6H7z" /><path fill="#2b7cd3" d="M7 7h23v7H7z" /><path fill="#185abd" d="M7 14h23v7H7z" /><path fill="#103f91" d="M7 21h23v6q0 1-1 1H7z" /><rect y="6" width="16" height="16" rx="1" fill="#1b56b8" />
    <text x="8" y="18" textAnchor="middle" fontSize="11" fontWeight="700" fontFamily="Open Sans, sans-serif" fill="#fff">W</text>
  </Svg>,
  <Svg vb="0 0 30 30" className="w-[30px]"><path fill="#0069b0" d="M.5 9l2.500-2L22 21.500v8.200z" /><path fill="#0a86d0" d="M.5 21l2.500 2L22 8.500V.3z" /><path fill="#28a5f2" d="M22 .2L30 3.500v23L22 29.800z" /></Svg>,
];

function Taskbar() {
  const k = { stroke: "#1d2022", strokeWidth: 1.4 };
  return (
    <div className="flex h-[60px] items-center border-t border-[#bcd3da] bg-[#cfe8ee] pb-[1px] text-[#1d2022]">
      <div className="flex w-[575px] items-center pl-[26px]">
        <Svg vb="0 0 30 27" className="mt-[1px] w-[30px]">
          <circle cx="7" cy="13" r="6.500" fill="#a9bbdf" /><circle cx="15" cy="9" r="9" fill="#b9cbee" /><circle cx="23.500" cy="12" r="6.500" fill="#a5b5d4" /><path fill="#e4ebf8" d="M6 12h18v7H6z" />
          <path fill="#1e9de4" d="M11 5c5 4 7 6 6 9-1 2-5 2-6 0-.5-2 0-6 0-9zM7 13c6 4 9 7 8 11-1 3-7 3-8 0-.6-3 0-8 0-11zM19 12c6 4 9 8 8 12-1 3-7 3-8 0-.6-3 0-8 0-12z" />
        </Svg>
        <div className="ml-[9px] text-[14.500px] leading-[20px]">
          <div><Fit w={32}>25°C</Fit></div>
          <div className="text-[#5f6d72]"><Fit w={38}>Lluvia</Fit></div>
        </div>
      </div>
      <div className="flex h-[58px] items-center">
        {apps.map((a, i) => (
          <div key={i} className="flex w-[55.100px] justify-center">
            <div className={"relative flex h-[48px] w-[48px] items-center justify-center rounded-[5px] " + (i === 6 ? "bg-[#e7f3f8] shadow-[0_0_1px_#8aa]" : "")}>
              {a}
              {i === 6 && <div className="absolute bottom-0 left-[9px] h-[4px] w-[30px] rounded-full bg-[#c42b1c]" />}
              {i > 8 && <div className="absolute bottom-0 left-[20px] h-[4px] w-[8px] rounded-full bg-[#75858a]" />}
            </div>
          </div>
        ))}
      </div>
      <div className="ml-auto flex items-center pr-[19px] text-[14.500px] leading-[20px]">
        <Svg vb="0 0 16 9" className="w-[16px]" {...k}><path d="M.7 8.300L8 1l7.300 7.300" /></Svg>
        <Svg vb="0 0 22 22" className="ml-[11px] w-[22px]" {...k}>
          <path d="M1.500 10A9 9 0 0 1 19 7.500M19.500 1.500v6h-6M2.500 21v-5.500h6M3 16c2 3.500 6 4.500 9 4" /><circle cx="16" cy="16.500" r="5" fill="#ff9a0a" stroke="none" />
        </Svg>
        <div className="ml-[16px] flex w-[30px] flex-col items-center"><Fit w={24}>ESP</Fit><Fit w={27}>LAA</Fit></div>
        <Svg vb="0 0 20 16" className="ml-[22px] w-[20px]" {...k}><path d="M.8 6.500a13 13 0 0 1 18.400 0M3.600 9.300a9 9 0 0 1 12.800 0M6.400 12a5.200 5.200 0 0 1 7.200 0" /><circle cx="10" cy="13.800" r="1.600" fill="#1d2022" stroke="none" /></Svg>
        <Svg vb="0 0 20 16" className="ml-[10px] w-[20px]" {...k}><path d="M1 5.500h3L8 1.500v13L4 10.500H1zM10.500 5q2 3 0 6M13.500 3q3.500 5 0 10" /><path d="M16.500 1.500q4 6.500 0 13" stroke="#9db4ba" /></Svg>
        <Svg vb="0 0 21 16" className="ml-[9px] w-[21px]" {...k}><path d="M8 4h8.500q1.500 0 1.500 1.500v6q0 1.500-1.500 1.500H7" /><path fill="#1d2022" stroke="none" d="M8 6h7v5H6V8zM18.500 6.500h2v4h-2zM1 3h6v3q0 2.500-2 2.700V14H3.500V8.700Q1 8.500 1 6zM2 .5h1V3H2zM5 .5h1V3H5z" /></Svg>
        <div className="ml-[19px] flex w-[70px] flex-col items-end"><Fit w={62}>2:10 p. m.</Fit><Fit w={69}>5/06/2022</Fit></div>
      </div>
    </div>
  );
}

export default function App() {
  return (
    <div className="h-[1080px] w-[1920px] overflow-hidden bg-black font-['Open_Sans','Noto_Sans',sans-serif]">
      <div className="flex h-[1020px]">
        <Rail />
        <div className="min-w-0 flex-1">
          <TabStrip />
          <div className="h-[87px] bg-[#3b4651]">
            <AddressBar />
            <Bookmarks />
          </div>
          <Page />
        </div>
      </div>
      <Taskbar />
    </div>
  );
}
